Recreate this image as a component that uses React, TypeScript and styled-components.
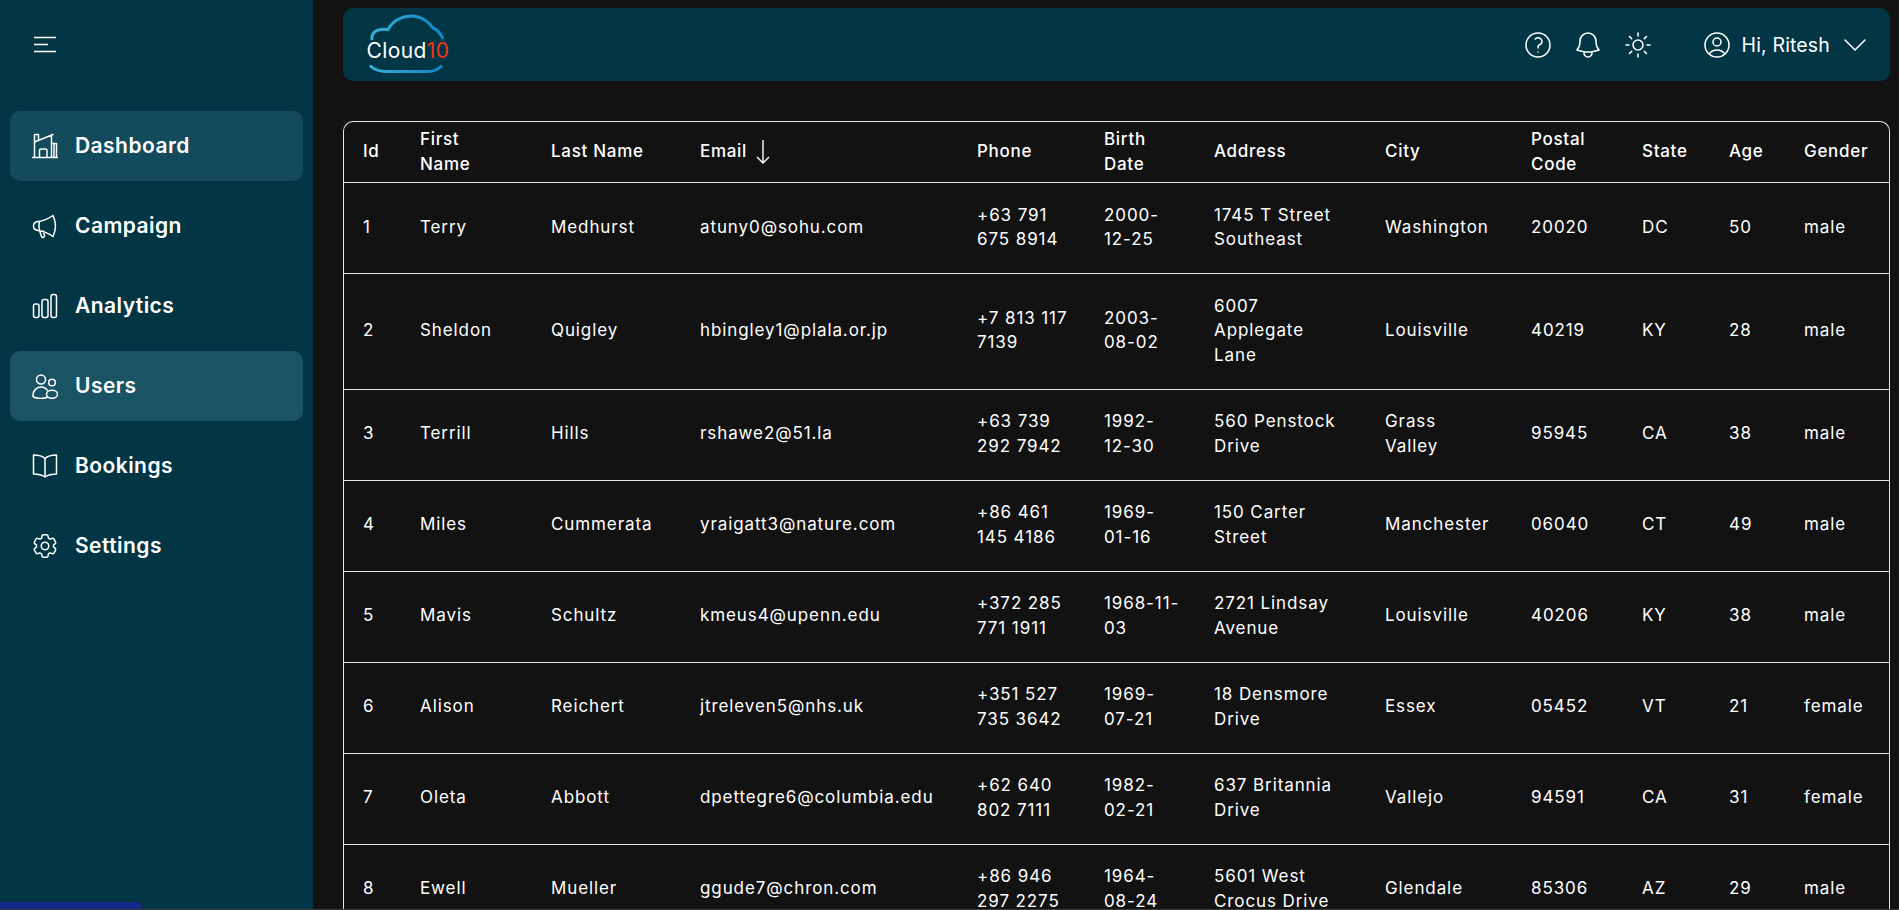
import React from "react";
import styled, { createGlobalStyle } from "styled-components";
import {
	HiOutlineQuestionMarkCircle,
	HiOutlineBell,
	HiOutlineSun,
	HiOutlineUserCircle,
	HiOutlineChevronDown,
	HiOutlineCog6Tooth,
} from "react-icons/hi2";

const GlobalStyle = createGlobalStyle`
	html, body {
		margin: 0;
		height: 100%;
		overflow: hidden;
		background: #121212;
		font-family: "Inter", "Liberation Sans", sans-serif;
		color: #fff;
	}
`;

// --- LAYOUT -----------------------------------------------------------------
const Page = styled.div`
	display: flex;
	height: 910px;
	overflow: hidden;
`;
const Sidebar = styled.aside`
	width: 313px;
	flex-shrink: 0;
	background-color: #023645;
	padding: 36px 10px 0;
	box-sizing: border-box;
`;
const MenuButton = styled.div`
	height: 18px;
	padding-left: 23px;
	margin-bottom: 57px;
`;
const NavList = styled.nav`
	display: flex;
	flex-direction: column;
	gap: 10px;
`;
const NavItem = styled.div<{ $bg?: string }>`
	display: flex;
	align-items: center;
	gap: 17px;
	height: 70px;
	padding-left: 22px;
	border-radius: 10px;
	background-color: ${(props) => props.$bg || "transparent"};
	font-size: 21px;
	font-weight: 600;
	letter-spacing: 0.45px;
	padding-bottom: 1px;
	box-sizing: border-box;
	svg {
		width: 26px;
		height: 26px;
		flex-shrink: 0;
	}
`;
const GearIcon = styled(HiOutlineCog6Tooth)`
	&& {
		width: 30px;
		height: 30px;
		margin: 0 -2px;
	}
`;
const Main = styled.main`
	flex: 1;
	padding: 8px 9px 0 30px;
	min-width: 0;
`;

// --- TOPBAR -----------------------------------------------------------------
const TopBar = styled.header`
	display: flex;
	align-items: center;
	justify-content: space-between;
	height: 73px;
	padding: 0 19px 0 23px;
	background-color: #023645;
	border-radius: 10px;
	margin-bottom: 40px;
`;
const IconRow = styled.div`
	display: flex;
	align-items: center;
	svg {
		width: 32px;
		height: 32px;
		stroke-width: 1.15;
		display: block;
	}
`;
const IconGap = styled.span<{ $w: number }>`
	display: block;
	width: ${(props) => props.$w}px;
`;
const Greeting = styled.span`
	font-size: 19.5px;
	letter-spacing: 0.15px;
	margin: 0 9px 0 9px;
`;

// --- TABLE ------------------------------------------------------------------
const TableWrap = styled.div`
	border: 1px solid #e6e6e6;
	border-bottom: none;
	border-radius: 10px 10px 0 0;
	overflow: hidden;
`;
const Table = styled.table`
	width: 100%;
	table-layout: fixed;
	border-collapse: collapse;
	font-size: 17px;
	line-height: 24.5px;
	letter-spacing: 0.9px;
`;
const HeadCell = styled.th`
	padding: 4.5px 0 5.5px 19px;
	height: 50px;
	text-align: left;
	font-weight: 500;
	letter-spacing: 0.7px;
	border-bottom: 1px solid #e6e6e6;
	white-space: pre-line;
`;
const Cell = styled.td`
	padding: 19.5px 0 21.5px 19px;
	border-bottom: 1px solid #e6e6e6;
	white-space: pre-line;
	font-weight: 400;
`;
const SortArrow = styled.svg`
	width: 14px;
	height: 26px;
	margin-left: 9px;
	vertical-align: -8px;
`;
const TaskBar = styled.div`
	position: fixed;
	left: 0;
	bottom: 1px;
	width: 142px;
	height: 7px;
	background-color: #122a8c;
	border-radius: 0 5px 0 0;
`;
const BottomLine = styled.div`
	position: fixed;
	left: 0;
	right: 0;
	bottom: 0;
	height: 1px;
	background-color: #3a3a3a;
`;

// --- ICONS ------------------------------------------------------------------
const Stroke = { fill: "none", stroke: "#fff", strokeWidth: 1.5, strokeLinecap: "round", strokeLinejoin: "round" } as const;

const FactoryIcon = () => (
	<svg viewBox="0 0 26 26" {...Stroke}>
		<path d="M0.5 24.500h25M2.500 24.500V9L21 1.500M2.500 9V1.500H6.500V7.500M19.500 2.500V24.500M19.500 10.500H24.500V24.500M22 10.500V24.500M7.500 24.500V17.500C7.500 16.500 8 16 9 16H13.500C14.500 16 15 16.500 15 17.500V24.500" />
	</svg>
);
const MegaphoneIcon = () => (
	<svg viewBox="0 0 26 26" {...Stroke}>
		<path d="M21 2.500C16 6 11 8 6 8.500 3 8.800 1.500 10.500 1.500 13S3 17.200 6 17.500C11 18 16 20 21 23.500 22.500 20 23.500 16.500 23.500 13S22.500 6 21 2.500zM7.500 8.500C6.700 11.500 6.700 14.500 7.500 17.500M7.500 17.500L9.500 23.500C10.500 25 13 24.500 12.500 22.500L11.300 18" />
	</svg>
);
const BarsIcon = () => (
	<svg viewBox="0 0 26 26" {...Stroke}>
		<rect x="1.500" y="11" width="5.500" height="13.500" rx="2" />
		<rect x="10" y="6.500" width="6" height="18" rx="2" />
		<rect x="19" y="1.500" width="5.500" height="23" rx="2" />
	</svg>
);
const UsersIcon = () => (
	<svg viewBox="0 0 26 26" {...Stroke}>
		<circle cx="9" cy="6.500" r="4.500" />
		<circle cx="20" cy="9.500" r="3.300" />
		<path d="M0.800 23C0.800 18 4.300 14 9 14 11.800 14 14 15.200 15.300 17.200M0.800 23C2 25 5 25.500 9 25.500 11.500 25.500 13.500 25.200 15.500 24.300" />
		<ellipse cx="20" cy="21.200" rx="5.500" ry="4" />
	</svg>
);
const BookIcon = () => (
	<svg viewBox="0 0 26 26" {...Stroke}>
		<path d="M13 5.500C10.500 3 6 2 1.500 2V21C6 21 10 22 13 24 16 22 20 21 24.500 21V2C20 2 15.500 3 13 5.500zM13 5.500V24" />
	</svg>
);

// --- DATA -------------------------------------------------------------------
const columnWidths = [57, 131, 149, 277, 127, 110, 171, 146, 111, 87, 75, 105];
const headers = ["Id", "First\nName", "Last Name", "Email", "Phone", "Birth\nDate", "Address", "City", "Postal\nCode", "State", "Age", "Gender"];
const rows = [
	["1", "Terry", "Medhurst", "atuny0@sohu.com", "+63 791\n675 8914", "2000-\n12-25", "1745 T Street\nSoutheast", "Washington", "20020", "DC", "50", "male"],
	["2", "Sheldon", "Quigley", "hbingley1@plala.or.jp", "+7 813 117\n7139", "2003-\n08-02", "6007\nApplegate\nLane", "Louisville", "40219", "KY", "28", "male"],
	["3", "Terrill", "Hills", "rshawe2@51.la", "+63 739\n292 7942", "1992-\n12-30", "560 Penstock\nDrive", "Grass\nValley", "95945", "CA", "38", "male"],
	["4", "Miles", "Cummerata", "yraigatt3@nature.com", "+86 461\n145 4186", "1969-\n01-16", "150 Carter\nStreet", "Manchester", "06040", "CT", "49", "male"],
	["5", "Mavis", "Schultz", "kmeus4@upenn.edu", "+372 285\n771 1911", "1968-11-\n03", "2721 Lindsay\nAvenue", "Louisville", "40206", "KY", "38", "male"],
	["6", "Alison", "Reichert", "jtreleven5@nhs.uk", "+351 527\n735 3642", "1969-\n07-21", "18 Densmore\nDrive", "Essex", "05452", "VT", "21", "female"],
	["7", "Oleta", "Abbott", "dpettegre6@columbia.edu", "+62 640\n802 7111", "1982-\n02-21", "637 Britannia\nDrive", "Vallejo", "94591", "CA", "31", "female"],
	["8", "Ewell", "Mueller", "ggude7@chron.com", "+86 946\n297 2275", "1964-\n08-24", "5601 West\nCrocus Drive", "Glendale", "85306", "AZ", "29", "male"],
];
const navItems = [
	{ label: "Dashboard", icon: <FactoryIcon />, bg: "#134a5c" },
	{ label: "Campaign", icon: <MegaphoneIcon /> },
	{ label: "Analytics", icon: <BarsIcon /> },
	{ label: "Users", icon: <UsersIcon />, bg: "#1a5364" },
	{ label: "Bookings", icon: <BookIcon /> },
	{ label: "Settings", icon: <GearIcon strokeWidth={1.2} /> },
];

const Logo = () => (
	<svg width="86" height="62" viewBox="0 0 86 62" style={{ display: "block" }}>
		<defs>
			<linearGradient id="cloudGrad" x1="0" y1="0" x2="1" y2="0">
				<stop offset="0" stopColor="#36b0d6" />
				<stop offset="1" stopColor="#1284c4" />
			</linearGradient>
		</defs>
		<path d="M6 26C5 19 10 14 22 15.500 27 6 37 1.500 47 2 57 3 63 8 67 14 72 16 75 20 77 25" fill="none" stroke="url(#cloudGrad)" strokeWidth="3" />
		<path d="M4 51.500C8 56 13 57.500 21 57.500H62C68 57.500 72 56 76 51.500" fill="none" stroke="url(#cloudGrad)" strokeWidth="3" />
		<text x="0.500" y="43.500" fontFamily="Inter, sans-serif" fontSize="21" fill="#fff" letterSpacing="0.4">
			Cloud<tspan fill="#f0341a">10</tspan>
		</text>
	</svg>
);

export default function App() {
	return (
		<>
			<GlobalStyle />
			<Page>
				<Sidebar>
					<MenuButton>
						<svg width="24" height="18" viewBox="0 0 24 18" fill="none" stroke="#fff" strokeWidth="1.6">
							<path d="M1 1.500h22M1 8.500h14M1 15.500h22" />
						</svg>
					</MenuButton>
					<NavList>
						{navItems.map((item) => (
							<NavItem key={item.label} $bg={item.bg}>
								{item.icon}
								{item.label}
							</NavItem>
						))}
					</NavList>
				</Sidebar>
				<Main>
					<TopBar>
						<Logo />
						<IconRow>
							<HiOutlineQuestionMarkCircle />
							<IconGap $w={18} />
							<HiOutlineBell />
							<IconGap $w={18} />
							<HiOutlineSun />
							<IconGap $w={47} />
							<HiOutlineUserCircle />
							<Greeting>Hi, Ritesh</Greeting>
							<HiOutlineChevronDown />
						</IconRow>
					</TopBar>
					<TableWrap>
						<Table>
							<colgroup>
								{columnWidths.map((w, i) => (
									<col key={i} style={{ width: w }} />
								))}
							</colgroup>
							<thead>
								<tr>
									{headers.map((h) => (
										<HeadCell key={h}>
											{h}
											{h === "Email" && (
												<SortArrow viewBox="0 0 14 26" fill="none" stroke="#fff" strokeWidth="1.4">
													<path d="M7 1v23M1 18l6 6 6-6" />
												</SortArrow>
											)}
										</HeadCell>
									))}
								</tr>
							</thead>
							<tbody>
								{rows.map((row) => (
									<tr key={row[0]}>
										{row.map((value, i) => (
											<Cell key={i}>{value}</Cell>
										))}
									</tr>
								))}
							</tbody>
						</Table>
					</TableWrap>
				</Main>
			</Page>
			<TaskBar />
			<BottomLine />
		</>
	);
}
